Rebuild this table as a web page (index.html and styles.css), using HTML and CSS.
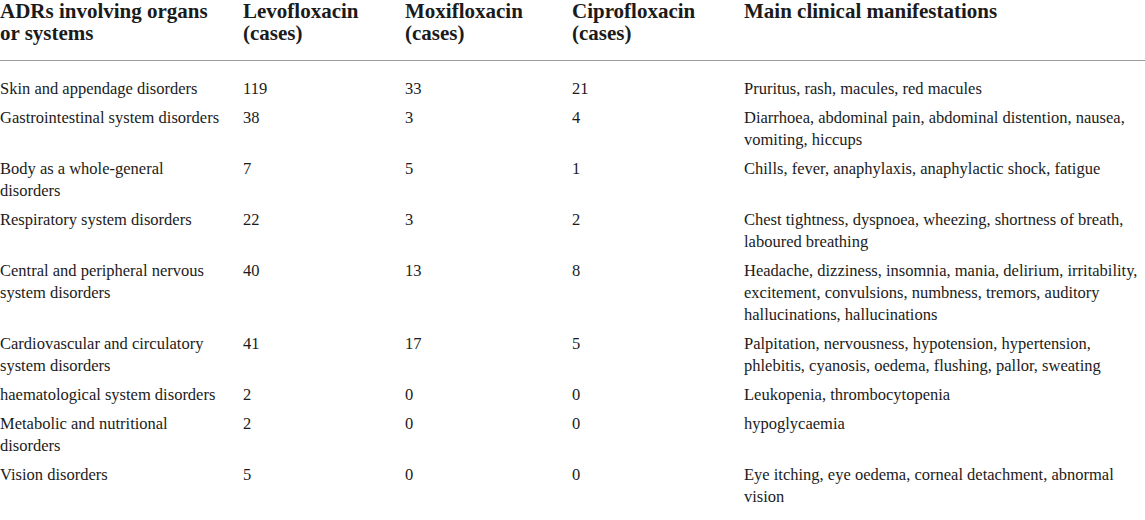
FILE: index.html
```html
<!DOCTYPE html>
<html lang="en">
<head>
  <meta charset="UTF-8">
  <meta name="viewport" content="width=device-width, initial-scale=1">
  <title>ADRs of fluoroquinolones</title>
  <link rel="stylesheet" href="styles.css">
</head>
<body>
  <div class="table-wrap">
    <table class="adr-table">
      <colgroup>
        <col class="col-organ">
        <col class="col-num">
        <col class="col-num2">
        <col class="col-num3">
        <col>
      </colgroup>
      <thead>
        <tr>
          <th>ADRs involving organs or systems</th>
          <th>Levofloxacin (cases)</th>
          <th>Moxifloxacin (cases)</th>
          <th>Ciprofloxacin (cases)</th>
          <th>Main clinical manifestations</th>
        </tr>
      </thead>
      <tbody>
        <tr>
          <td>Skin and appendage disorders</td>
          <td>119</td>
          <td>33</td>
          <td>21</td>
          <td>Pruritus, rash, macules, red macules</td>
        </tr>
        <tr>
          <td>Gastrointestinal system disorders</td>
          <td>38</td>
          <td>3</td>
          <td>4</td>
          <td>Diarrhoea, abdominal pain, abdominal distention, nausea, vomiting, hiccups</td>
        </tr>
        <tr>
          <td>Body as a whole-general disorders</td>
          <td>7</td>
          <td>5</td>
          <td>1</td>
          <td>Chills, fever, anaphylaxis, anaphylactic shock, fatigue</td>
        </tr>
        <tr>
          <td>Respiratory system disorders</td>
          <td>22</td>
          <td>3</td>
          <td>2</td>
          <td>Chest tightness, dyspnoea, wheezing, shortness of breath, laboured breathing</td>
        </tr>
        <tr>
          <td>Central and peripheral nervous system disorders</td>
          <td>40</td>
          <td>13</td>
          <td>8</td>
          <td>Headache, dizziness, insomnia, mania, delirium, irritability, excitement, convulsions, numbness, tremors, auditory hallucinations, hallucinations</td>
        </tr>
        <tr>
          <td>Cardiovascular and circulatory system disorders</td>
          <td>41</td>
          <td>17</td>
          <td>5</td>
          <td>Palpitation, nervousness, hypotension, hypertension, phlebitis, cyanosis, oedema, flushing, pallor, sweating</td>
        </tr>
        <tr>
          <td>haematological system disorders</td>
          <td>2</td>
          <td>0</td>
          <td>0</td>
          <td>Leukopenia, thrombocytopenia</td>
        </tr>
        <tr>
          <td>Metabolic and nutritional disorders</td>
          <td>2</td>
          <td>0</td>
          <td>0</td>
          <td>hypoglycaemia</td>
        </tr>
        <tr>
          <td>Vision disorders</td>
          <td>5</td>
          <td>0</td>
          <td>0</td>
          <td>Eye itching, eye oedema, corneal detachment, abnormal vision</td>
        </tr>
      </tbody>
    </table>
  </div>
</body>
</html>
```

FILE: styles.css
```css
body {
  margin: 0;
  padding: 0;
  background: #fff;
  color: #1b1b1b;
  font-family: "Liberation Serif", "Times New Roman", serif;
}
.table-wrap {
  width: 1145px;
  padding-bottom: 8px;
  border-bottom: 2px solid #ececec;
}
.adr-table {
  width: 100%;
  border-collapse: collapse;
  table-layout: fixed;
}
.col-organ {
  width: 243px;
}
.col-num {
  width: 162px;
}
.col-num2 {
  width: 167px;
}
.col-num3 {
  width: 172px;
}
.adr-table th {
  text-align: left;
  vertical-align: top;
  font-size: 21px;
  font-weight: bold;
  line-height: 22px;
  padding: 0 12px 16px 0;
  border-bottom: 1px solid #9a9a9a;
}
.adr-table td {
  text-align: left;
  vertical-align: top;
  font-size: 16.5px;
  line-height: 22px;
  padding: 3px 12px 4px 0;
}
.adr-table td:first-child {
  padding-right: 19px;
}
.adr-table td:last-child,
.adr-table th:last-child {
  padding-right: 0;
}
.adr-table tbody tr:first-child td {
  padding-top: 17px;
}
```
